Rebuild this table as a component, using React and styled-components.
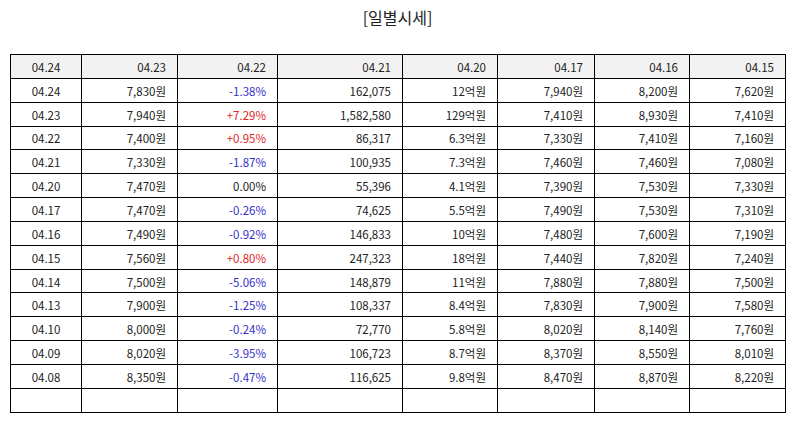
import styled, { createGlobalStyle } from "styled-components";

const GlobalStyle = createGlobalStyle`
  body {
    margin: 0;
    background: #fff;
    font-family: "Noto Sans CJK KR", "Noto Sans", sans-serif;
    color: #222;
  }
`;

const Page = styled.div`
  width: 794px;
  padding: 6px 9px 0 10px;
  box-sizing: border-box;
`;

const Title = styled.h2`
  margin: 0 0 26px 0;
  text-align: center;
  font-size: 16px;
  font-weight: 400;
  line-height: 22px;
  color: #222;
`;

const Table = styled.table`
  width: 775px;
  border-collapse: collapse;
  table-layout: fixed;
  border: 1px solid #000;
`;

const Row = styled.tr`
  height: 23.85px;
`;

const Cell = styled.td`
  border: 1px solid #000;
  padding: 1px 11px 0 0;
  font-size: 11.5px;
  line-height: 14px;
  text-align: ${(p) => (p.$center ? "center" : "right")};
  padding-right: ${(p) => (p.$center ? "0" : "11px")};
  background: ${(p) => (p.$head ? "#f2f2f2" : "#fff")};
  color: ${(p) =>
    p.$tone === "up" ? "#e02626" : p.$tone === "down" ? "#3232c8" : "#222"};
  white-space: nowrap;
`;

const widths = [71, 96, 100, 125, 95, 97, 95, 96];

const header = ["04.24", "04.23", "04.22", "04.21", "04.20", "04.17", "04.16", "04.15"];

const rows = [
  ["04.24", "7,830원", "-1.38%", "162,075", "12억원", "7,940원", "8,200원", "7,620원"],
  ["04.23", "7,940원", "+7.29%", "1,582,580", "129억원", "7,410원", "8,930원", "7,410원"],
  ["04.22", "7,400원", "+0.95%", "86,317", "6.3억원", "7,330원", "7,410원", "7,160원"],
  ["04.21", "7,330원", "-1.87%", "100,935", "7.3억원", "7,460원", "7,460원", "7,080원"],
  ["04.20", "7,470원", "0.00%", "55,396", "4.1억원", "7,390원", "7,530원", "7,330원"],
  ["04.17", "7,470원", "-0.26%", "74,625", "5.5억원", "7,490원", "7,530원", "7,310원"],
  ["04.16", "7,490원", "-0.92%", "146,833", "10억원", "7,480원", "7,600원", "7,190원"],
  ["04.15", "7,560원", "+0.80%", "247,323", "18억원", "7,440원", "7,820원", "7,240원"],
  ["04.14", "7,500원", "-5.06%", "148,879", "11억원", "7,880원", "7,880원", "7,500원"],
  ["04.13", "7,900원", "-1.25%", "108,337", "8.4억원", "7,830원", "7,900원", "7,580원"],
  ["04.10", "8,000원", "-0.24%", "72,770", "5.8억원", "8,020원", "8,140원", "7,760원"],
  ["04.09", "8,020원", "-3.95%", "106,723", "8.7억원", "8,370원", "8,550원", "8,010원"],
  ["04.08", "8,350원", "-0.47%", "116,625", "9.8억원", "8,470원", "8,870원", "8,220원"],
];

const toneOf = (v) => (v.startsWith("+") ? "up" : v.startsWith("-") ? "down" : undefined);

export default function App() {
  return (
    <Page>
      <GlobalStyle />
      <Title>[일별시세]</Title>
      <Table>
        <colgroup>
          {widths.map((w, i) => (
            <col key={i} style={{ width: w }} />
          ))}
        </colgroup>
        <tbody>
          <Row>
            {header.map((h, i) => (
              <Cell key={i} $head $center={i === 0}>
                {h}
              </Cell>
            ))}
          </Row>
          {rows.map((r, ri) => (
            <Row key={ri}>
              {r.map((v, i) => (
                <Cell key={i} $center={i === 0} $tone={i === 2 ? toneOf(v) : undefined}>
                  {v}
                </Cell>
              ))}
            </Row>
          ))}
          <Row>
            {widths.map((_, i) => (
              <Cell key={i} />
            ))}
          </Row>
        </tbody>
      </Table>
    </Page>
  );
}
